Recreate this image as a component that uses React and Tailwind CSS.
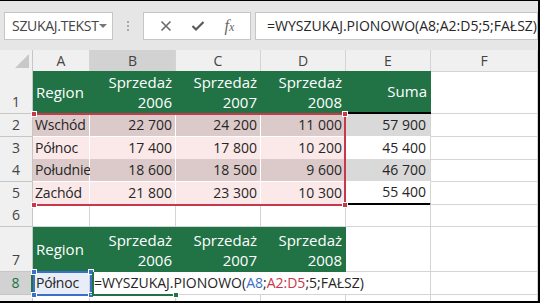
const GRID = 'border-r border-b border-[#d4d4d4]'
const COLS = 'grid grid-cols-[33px_57px_86px_85px_85px_85px_107px]'
const GREEN = 'bg-[#217346] text-white text-[15px]'

const DATA = [
  { n: 2, h: 'h-[23px]', region: 'Wschód', b: '22 700', c: '24 200', d: '11 000', e: '57 900', dark: true },
  { n: 3, h: 'h-[22px]', region: 'Północ', b: '17 400', c: '17 800', d: '10 200', e: '45 400', dark: false },
  { n: 4, h: 'h-[23px]', region: 'Południe', b: '18 600', c: '18 500', d: '9 600', e: '46 700', dark: true },
  { n: 5, h: 'h-[22px]', region: 'Zachód', b: '21 800', c: '23 300', d: '10 300', e: '55 400', dark: false },
]

function RowHead({ n, active }) {
  return (
    <div
      className={
        active
          ? 'flex items-end justify-center pb-[1px] bg-[#d2d2d2] text-[#217346] text-[14px] border-b border-[#c6c6c6] border-r-2 border-r-[#217346]'
          : 'flex items-end justify-center pb-[1px] bg-[#f0f0f0] text-[#444] text-[14px] border-b border-r border-[#c6c6c6]'
      }
    >
      {n}
    </div>
  )
}

function Header({ year }) {
  return (
    <div className={`${GREEN} flex flex-col items-end justify-end pr-[4px] pb-[2px] leading-[20px]`}>
      <span>Sprzedaż</span>
      <span>{year}</span>
    </div>
  )
}

function Handle({ className }) {
  return <div className={`absolute w-[6px] h-[6px] border border-white ${className}`} />
}

export default function App() {
  return (
    <div className="w-[540px] h-[303px] overflow-hidden bg-white border-t border-r-2 border-b-2 border-black font-['Open_Sans',sans-serif] text-[#262626]">
      <div className="relative">
        {/* formula bar */}
        <div className="h-[49px] bg-[#e6e6e6] flex items-center pl-[4px]">
          <div className="w-[111px] h-[28px] bg-white border border-[#c6c6c6] flex items-center pl-[7px] pr-[5px] text-[14px] text-[#444]">
            <span className="flex-1 tracking-[-0.3px]">SZUKAJ.TEKST</span>
            <span className="w-0 h-0 border-l-[4px] border-r-[4px] border-t-[4px] border-l-transparent border-r-transparent border-t-[#777]" />
          </div>
          <div className="w-[31px] flex flex-col items-center gap-[2px]">
            <span className="w-[2px] h-[2px] bg-[#aaa]" />
            <span className="w-[2px] h-[2px] bg-[#aaa]" />
            <span className="w-[2px] h-[2px] bg-[#aaa]" />
          </div>
          <div className="w-[110px] h-[28px] bg-white border border-[#c6c6c6] flex items-center justify-around px-[6px]">
            <svg width="12" height="12" viewBox="0 0 12 12">
              <path d="M1.5 1.5 L10.5 10.5 M10.5 1.5 L1.5 10.5" stroke="#6b6b6b" strokeWidth="1.6" fill="none" />
            </svg>
            <svg width="14" height="12" viewBox="0 0 14 12">
              <path d="M1.5 6 L5 9.5 L12.5 2" stroke="#5a5a5a" strokeWidth="2.2" fill="none" />
            </svg>
            <span className="font-['Liberation_Serif',serif] italic text-[16px] text-[#666] leading-none">
              f<span className="text-[12px]">x</span>
            </span>
          </div>
          <div className="ml-[4px] flex-1 h-[28px] bg-white border border-[#c6c6c6] flex items-center pl-[11px] text-[14px] whitespace-nowrap">
            =WYSZUKAJ.PIONOWO(A8;A2:D5;5;FAŁSZ)
          </div>
        </div>

        {/* column headers */}
        <div className={`${COLS} h-[21px] text-[14px] text-[#444]`}>
          <div className="bg-[#f0f0f0] border-r border-b border-[#c6c6c6] flex items-end justify-end pr-[3px] pb-[3px]">
            <svg width="14" height="14" viewBox="0 0 14 14">
              <path d="M14 0 L14 14 L0 14 Z" fill="#c8c8c8" />
            </svg>
          </div>
          {['A', 'B', 'C', 'D', 'E', 'F'].map(l => (
            <div
              key={l}
              className={`flex items-center justify-center border-r border-b border-[#d4d4d4] ${l === 'B' ? 'bg-[#d2d2d2] border-b-[#217346]' : 'bg-[#f0f0f0]'}`}
            >
              {l}
            </div>
          ))}
        </div>

        {/* row 1 */}
        <div className={`${COLS} h-[43px]`}>
          <RowHead n={1} />
          <div className={`${GREEN} flex items-center pl-[3px]`}>Region</div>
          <Header year="2006" />
          <Header year="2007" />
          <Header year="2008" />
          <div className={`${GREEN} flex items-center justify-end pr-[4px] border-b-2 border-black`}>Suma</div>
          <div className={GRID} />
        </div>

        {/* rows 2-5 */}
        {DATA.map(r => {
          const bg = r.dark ? 'bg-[#dccaca]' : 'bg-[#fbe9e9]'
          const cell = `${bg} border-r border-b border-white flex items-end pb-[1px] leading-[20px] text-[14px]`
          return (
            <div key={r.n} className={`${COLS} ${r.h}`}>
              <RowHead n={r.n} />
              <div className={`${cell} pl-[2px] tracking-[-0.2px]`}>{r.region}</div>
              <div className={`${cell} justify-end pr-[3px]`}>{r.b}</div>
              <div className={`${cell} justify-end pr-[3px]`}>{r.c}</div>
              <div className={`${cell} justify-end pr-[3px]`}>{r.d}</div>
              <div
                className={`${r.dark ? 'bg-[#d9d9d9]' : 'bg-white'} flex items-end justify-end pr-[4px] pb-[1px] leading-[20px] text-[14px] border-r border-[#d4d4d4] ${r.n === 5 ? 'border-b-2 border-b-black' : 'border-b border-b-white'}`}
              >
                {r.e}
              </div>
              <div className={GRID} />
            </div>
          )
        })}

        {/* row 6 */}
        <div className={`${COLS} h-[23px]`}>
          <RowHead n={6} />
          {[0, 1, 2, 3, 4, 5].map(i => <div key={i} className={GRID} />)}
        </div>

        {/* row 7 */}
        <div className={`${COLS} h-[45px]`}>
          <RowHead n={7} />
          <div className={`${GREEN} flex items-center pl-[3px]`}>Region</div>
          <Header year="2006" />
          <Header year="2007" />
          <Header year="2008" />
          <div className={GRID} />
          <div className={GRID} />
        </div>

        {/* row 8 */}
        <div className={`${COLS} h-[23px] text-[14px]`}>
          <RowHead n={8} active />
          <div className="bg-[#e8edf7] border-r border-b border-[#d4d4d4] flex items-end pl-[3px] pb-[1px] leading-[20px] tracking-[-0.2px]">Północ</div>
          <div className="relative z-10 border-b border-[#d4d4d4] flex items-end pl-[4px] pb-[1px] leading-[20px] whitespace-nowrap overflow-visible">
            <span>
              =WYSZUKAJ.PIONOWO(<span className="text-[#3a6fc4]">A8</span>;<span className="text-[#c5394a]">A2:D5</span>;5;FAŁSZ)
            </span>
            <span className="inline-block w-px h-[17px] bg-black ml-[3px] mb-[1px]" />
          </div>
          <div className="border-b border-[#d4d4d4]" />
          <div className="border-b border-[#d4d4d4]" />
          <div className={GRID} />
          <div className={GRID} />
        </div>

        {/* row 9 */}
        <div className={`${COLS} h-[23px]`}>
          <RowHead n={9} />
          {[0, 1, 2, 3, 4, 5].map(i => <div key={i} className={GRID} />)}
        </div>

        {/* red reference A2:D5 */}
        <div className="absolute left-[33px] top-[112px] w-[313px] h-[93px] border-t-2 border-r-2 border-b-2 border-[#c5394a] pointer-events-none" />
        <Handle className="bg-[#c5394a] left-[31px] top-[110px]" />
        <Handle className="bg-[#c5394a] left-[342px] top-[110px]" />
        <Handle className="bg-[#c5394a] left-[342px] top-[201px]" />
        <Handle className="bg-[#c5394a] left-[31px] top-[201px]" />

        {/* blue reference A8 */}
        <div className="absolute left-[33px] top-[270px] w-[59px] h-[25px] border-2 border-[#3a70c8]" />
        <Handle className="bg-[#3a70c8] left-[31px] top-[268px]" />
        <Handle className="bg-[#3a70c8] left-[88px] top-[268px]" />
        <Handle className="bg-[#3a70c8] left-[88px] top-[291px]" />
        <Handle className="bg-[#3a70c8] left-[31px] top-[291px]" />

        {/* active cell B8 */}
        <div className="absolute left-[92px] top-[271px] w-[2px] h-[23px] bg-[#217346] z-20" />
        <div className="absolute left-[92px] top-[293px] w-[84px] h-[2px] bg-[#217346] z-20" />
        <div className="absolute left-[173px] top-[291px] w-[6px] h-[6px] bg-[#217346] border border-white z-20" />
      </div>
    </div>
  )
}
